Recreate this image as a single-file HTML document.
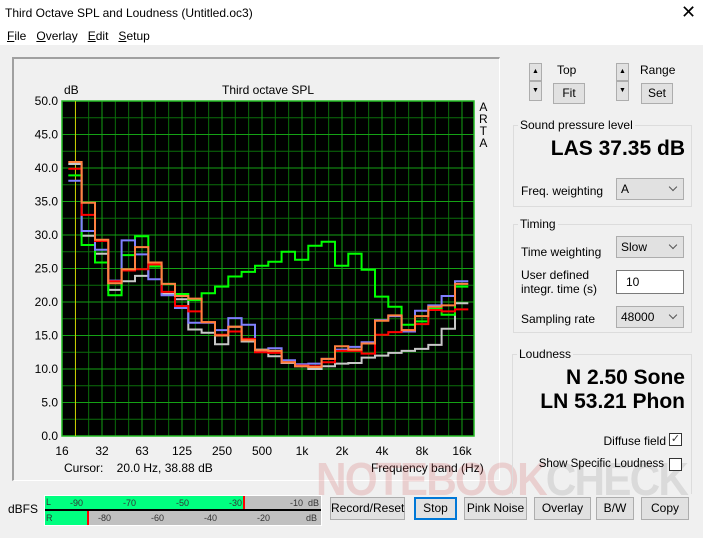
<!DOCTYPE html>
<html><head><meta charset="utf-8"><style>
*{box-sizing:border-box;margin:0;padding:0}
body{width:703px;height:538px;background:#f0f0f0;font-family:"Liberation Sans",sans-serif;font-size:12px;color:#000;position:relative;overflow:hidden}
.a{position:absolute;white-space:nowrap}
.btn{position:absolute;background:#e1e1e1;border:1px solid #adadad;text-align:center;font-size:12px}
.grp{position:absolute;border:1px solid #dcdcdc}
.gt{position:absolute;background:#f0f0f0;padding:0 2px;top:-8px;left:4px}
.cb{position:absolute;background:#e1e1e1;border:1px solid #adadad;padding:3px 0 0 4px}
.cb:after{content:"";position:absolute;right:7px;top:5px;width:5px;height:5px;border-right:1px solid #555;border-bottom:1px solid #555;transform:rotate(45deg)}
.chk{position:absolute;width:13px;height:13px;border:1px solid #333;background:#fff}
.big{font-weight:bold;font-size:21px}
</style></head><body>
<div class="a" style="left:0;top:0;width:703px;height:45px;background:#fff"></div>
<div class="a" style="left:5px;top:6px">Third Octave SPL and Loudness (Untitled.oc3)</div>
<div class="a" style="left:681px;top:2px;font-size:18px;font-weight:100">✕</div>
<div class="a" style="left:7px;top:29px"><u>F</u>ile&nbsp;&nbsp;&nbsp;<u>O</u>verlay&nbsp;&nbsp;&nbsp;<u>E</u>dit&nbsp;&nbsp;&nbsp;<u>S</u>etup</div>
<div class="a" style="left:12px;top:57px;width:488px;height:424px;border-top:2px solid #a0a0a0;border-left:2px solid #a0a0a0;border-right:1px solid #fff;border-bottom:1px solid #fff"></div>
<div class="a" style="left:64px;top:83px">dB</div>
<div class="a" style="left:222px;top:83px">Third octave SPL</div>
<div class="a" style="left:479px;top:101px;line-height:12px;text-align:center">A<br>R<br>T<br>A</div>
<svg class="a" style="left:0;top:0" width="703" height="538" id="s"></svg>
<div class="a" style="left:64px;top:461px">Cursor:&nbsp;&nbsp;&nbsp;&nbsp;20.0 Hz, 38.88 dB</div>
<div class="a" style="left:371px;top:461px">Frequency band (Hz)</div>
<div class="a" style="left:316px;top:452px;font-size:46px;font-weight:bold;letter-spacing:-2px;transform:scaleX(0.92);transform-origin:left"><span style="color:rgba(210,90,90,.22)">NOTEBOOK</span><span style="color:rgba(120,120,120,.18)">CHECK</span></div>

<div class="btn" style="left:529px;top:63px;width:13px;height:18px;font-size:7px;line-height:16px">▲</div>
<div class="btn" style="left:529px;top:81px;width:13px;height:20px;font-size:7px;line-height:18px">▼</div>
<div class="a" style="left:557px;top:63px">Top</div>
<div class="btn" style="left:553px;top:83px;width:32px;height:21px;line-height:19px">Fit</div>
<div class="btn" style="left:616px;top:63px;width:13px;height:18px;font-size:7px;line-height:16px">▲</div>
<div class="btn" style="left:616px;top:81px;width:13px;height:20px;font-size:7px;line-height:18px">▼</div>
<div class="a" style="left:640px;top:63px">Range</div>
<div class="btn" style="left:641px;top:83px;width:32px;height:21px;line-height:19px">Set</div>

<div class="grp" style="left:513px;top:125px;width:179px;height:82px"><span class="gt">Sound pressure level</span></div>
<div class="a big" style="right:18px;top:137px">LAS 37.35 dB</div>
<div class="a" style="left:521px;top:184px">Freq. weighting</div>
<div class="cb" style="left:616px;top:178px;width:68px;height:22px">A</div>

<div class="grp" style="left:513px;top:224px;width:179px;height:109px"><span class="gt">Timing</span></div>
<div class="a" style="left:521px;top:245px">Time weighting</div>
<div class="cb" style="left:616px;top:236px;width:68px;height:22px">Slow</div>
<div class="a" style="left:521px;top:268px;line-height:14px">User defined<br>integr. time (s)</div>
<div class="a" style="left:616px;top:270px;width:68px;height:24px;background:#fff;border:1px solid #7a7a7a;padding:4px 0 0 9px">10</div>
<div class="a" style="left:521px;top:312px">Sampling rate</div>
<div class="cb" style="left:616px;top:306px;width:68px;height:22px">48000</div>

<div class="grp" style="left:512px;top:354px;width:180px;height:140px;border-bottom:none"><span class="gt">Loudness</span></div>
<div class="a big" style="right:18px;top:366px">N 2.50 Sone</div>
<div class="a big" style="right:18px;top:390px">LN 53.21 Phon</div>
<div class="a" style="right:37px;top:434px">Diffuse field</div>
<div class="chk" style="left:669px;top:433px;font-size:11px;line-height:11px;text-align:center;color:#333">✓</div>
<div class="a" style="right:39px;top:458px;font-size:11.5px">Show Specific Loudness</div>
<div class="chk" style="left:669px;top:458px"></div>

<div class="a" style="left:8px;top:502px">dBFS</div>
<div class="a" style="left:44px;top:495px;width:278px;height:31px;background:#fff"></div>
<div class="a" style="left:45px;top:496px;width:276px;height:13px;background:#c0c0c0"></div>
<div class="a" style="left:45px;top:496px;width:200px;height:13px;background:#00ff80"></div>
<div class="a" style="left:243px;top:496px;width:2px;height:13px;background:#f00"></div>
<div class="a" style="left:45px;top:509px;width:276px;height:2px;background:#000"></div>
<div class="a" style="left:45px;top:511px;width:276px;height:14px;background:#c0c0c0"></div>
<div class="a" style="left:45px;top:511px;width:43px;height:14px;background:#00ff80"></div>
<div class="a" style="left:87px;top:511px;width:2px;height:14px;background:#f00"></div>
<div class="a" style="left:46px;top:497px;font-size:9px;color:#333">L</div>
<div class="a" style="left:46px;top:513px;font-size:9px;color:#333">R</div>
<div class="a" style="left:70px;top:498px;font-size:9px;color:#333">-90&nbsp;&nbsp;&nbsp;&nbsp;&nbsp;&nbsp;&nbsp;&nbsp;&nbsp;&nbsp;&nbsp;&nbsp;&nbsp;&nbsp;&nbsp;&nbsp;-70&nbsp;&nbsp;&nbsp;&nbsp;&nbsp;&nbsp;&nbsp;&nbsp;&nbsp;&nbsp;&nbsp;&nbsp;&nbsp;&nbsp;&nbsp;&nbsp;-50&nbsp;&nbsp;&nbsp;&nbsp;&nbsp;&nbsp;&nbsp;&nbsp;&nbsp;&nbsp;&nbsp;&nbsp;&nbsp;&nbsp;&nbsp;&nbsp;-30</div>
<div class="a" style="left:290px;top:498px;font-size:9px;color:#333">-10&nbsp;&nbsp;dB</div>
<div class="a" style="left:98px;top:513px;font-size:9px;color:#333">-80&nbsp;&nbsp;&nbsp;&nbsp;&nbsp;&nbsp;&nbsp;&nbsp;&nbsp;&nbsp;&nbsp;&nbsp;&nbsp;&nbsp;&nbsp;&nbsp;-60&nbsp;&nbsp;&nbsp;&nbsp;&nbsp;&nbsp;&nbsp;&nbsp;&nbsp;&nbsp;&nbsp;&nbsp;&nbsp;&nbsp;&nbsp;&nbsp;-40&nbsp;&nbsp;&nbsp;&nbsp;&nbsp;&nbsp;&nbsp;&nbsp;&nbsp;&nbsp;&nbsp;&nbsp;&nbsp;&nbsp;&nbsp;&nbsp;-20</div>
<div class="a" style="left:306px;top:513px;font-size:9px;color:#333">dB</div>

<div class="btn" style="left:330px;top:497px;width:75px;height:23px;line-height:21px">Record/Reset</div>
<div class="btn" style="left:414px;top:497px;width:43px;height:23px;line-height:19px;border:2px solid #0078d7">Stop</div>
<div class="btn" style="left:464px;top:497px;width:63px;height:23px;line-height:21px">Pink Noise</div>
<div class="btn" style="left:534px;top:497px;width:57px;height:23px;line-height:21px">Overlay</div>
<div class="btn" style="left:596px;top:497px;width:38px;height:23px;line-height:21px">B/W</div>
<div class="btn" style="left:641px;top:497px;width:48px;height:23px;line-height:21px">Copy</div>

<script>
var s=document.getElementById('s'),h='';
var X0=62,X1=474,Y0=101,Y1=436;
h+='<rect x="'+X0+'" y="'+Y0+'" width="'+(X1-X0)+'" height="'+(Y1-Y0)+'" fill="#000"/>';
for(var i=1;i<31;i++){var x=X0+i*13.333;h+='<line x1="'+x+'" y1="'+Y0+'" x2="'+x+'" y2="'+Y1+'" stroke="#0a6e0a" stroke-width="1"/>';}
for(var d=2.5;d<50;d+=2.5){var y=Y1-d*6.7;h+='<line x1="'+X0+'" y1="'+y+'" x2="'+X1+'" y2="'+y+'" stroke="#0a6e0a"/>';}
for(var k=0;k<11;k++){var x=X0+k*40;h+='<line x1="'+x+'" y1="'+Y0+'" x2="'+x+'" y2="'+Y1+'" stroke="#15a015"/>';}
for(var d=0;d<=50;d+=5){var y=Y1-d*6.7;h+='<line x1="'+X0+'" y1="'+y+'" x2="'+X1+'" y2="'+y+'" stroke="#15a015"/><text x="58" y="'+(y+4)+'" text-anchor="end" font-size="12" font-family="Liberation Sans">'+d.toFixed(1)+'</text>';}
h+='<rect x="'+X0+'" y="'+Y0+'" width="'+(X1-X0)+'" height="'+(Y1-Y0)+'" fill="none" stroke="#22bb22" stroke-width="1.5"/>';
h+='<line x1="75.5" y1="'+Y0+'" x2="75.5" y2="'+Y1+'" stroke="#c8c800"/>';
var lb=['16','32','63','125','250','500','1k','2k','4k','8k','16k'];
for(var k=0;k<11;k++)h+='<text x="'+(X0+k*40)+'" y="455" text-anchor="middle" font-size="12" font-family="Liberation Sans">'+lb[k]+'</text>';
var D={
'#c8c8c8':[40.6,29.9,27.2,21.8,23.1,23.9,25.3,21.2,20.4,15.9,15.4,13.7,16.3,14.1,12.9,11.9,10.9,10.4,10.0,10.4,10.8,10.9,11.7,12,12.4,12.7,13,13.6,16,19.8],
'#00ff00':[38.9,28.5,25.9,21,27,29.8,25.3,22.7,21.2,20.3,21.3,22.3,23.8,24.5,25.4,26,27.5,26.3,28.4,29,25.4,27.2,24.8,20.8,19.3,16.6,17.1,19,18.1,22.3],
'#8080ff':[38.1,30.6,27.8,23.2,29.2,27.1,23.4,21,19.1,16.9,16.9,15.8,17.6,16.6,12.7,13.1,11.3,10.7,10.8,11.5,12.9,13.3,14,17.3,17.9,15.6,18.7,19.5,20.9,23.1],
'#ff0000':[39.9,33,29.1,23.1,24.7,24.9,25.6,21.5,19.4,18.6,17,15.1,15.6,14.5,12.5,12.4,11,10.5,10.4,11,12.7,12.7,12.3,15.1,15.5,15.8,16.7,18.8,18.6,18.9],
'#ff8040':[40.9,34.8,29.3,22.8,24.9,28.2,25.9,22.7,20.9,20.5,17,15,16.3,14.3,12.8,12.7,11,10.4,10.3,11.5,13.4,12.9,13.8,17.2,18,15.8,17.9,19.3,19.5,22.7]};
for(var c in D){var v=D[c],p='';for(var i=0;i<30;i++){var xa=68.3+i*13.333,xb=xa+13.333,y=(Y1-v[i]*6.7).toFixed(1);p+=(i?'L':'M')+xa.toFixed(1)+','+y+'L'+xb.toFixed(1)+','+y;}
h+='<path d="'+p+'" fill="none" stroke="'+c+'" stroke-width="2"/>';}
s.innerHTML=h;
</script>
</body></html>
